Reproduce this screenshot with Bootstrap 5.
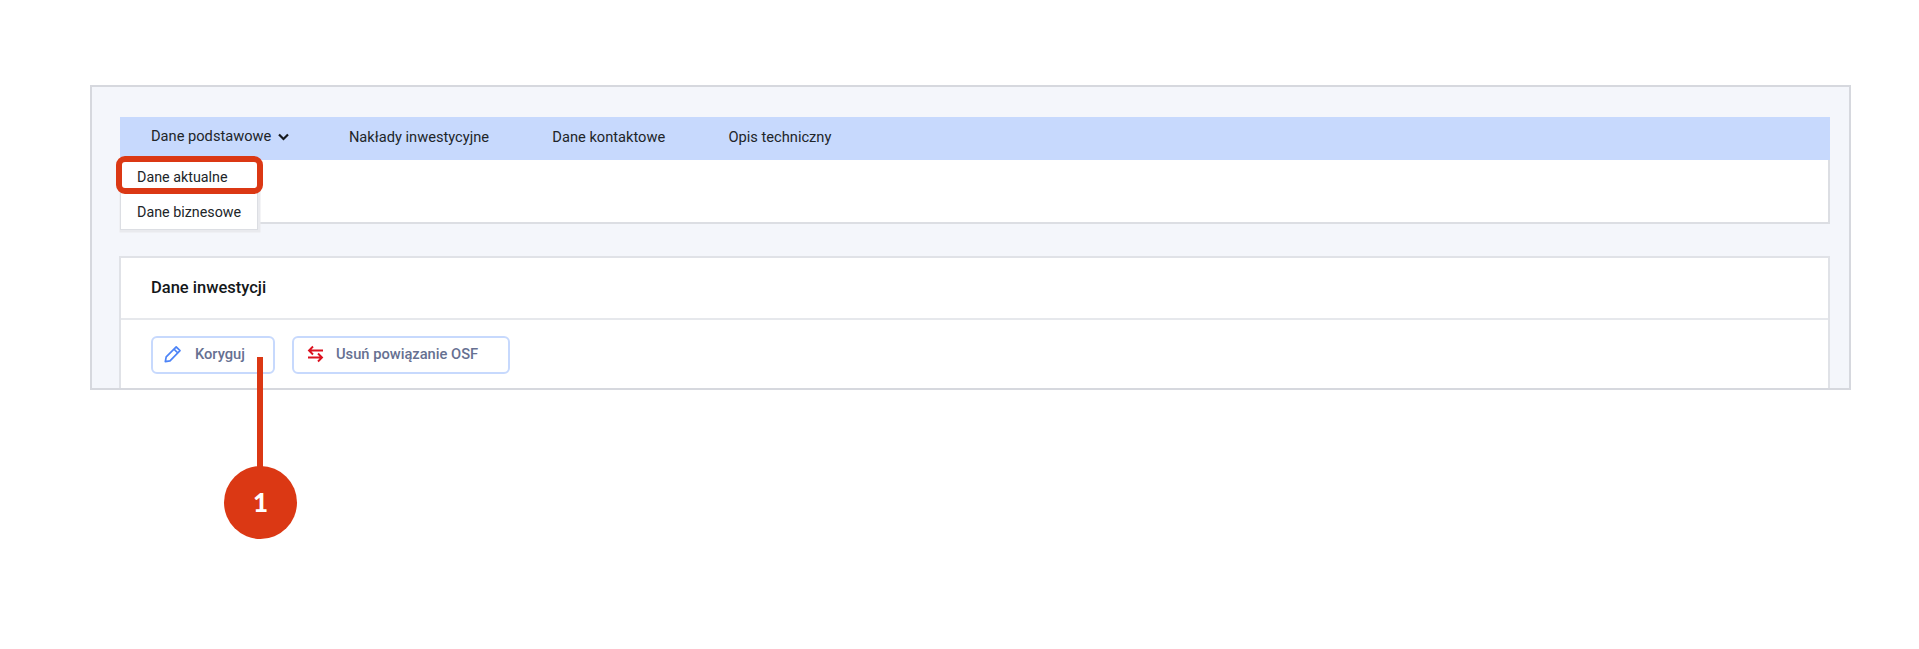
<!DOCTYPE html>
<html lang="pl">
<head>
<meta charset="utf-8">
<title>Dane inwestycji</title>
<link href="https://cdn.jsdelivr.net/npm/bootstrap@5.3.0/dist/css/bootstrap.min.css" rel="stylesheet">
<style>
html,body{height:649px;overflow:hidden;background:#fff}
body{font-family:Roboto,"Liberation Sans",sans-serif;font-size:14px;color:#212529;position:relative}
.shot-frame{margin:85px 0 0 90px;width:1761px;height:305px;background:#f4f6fb;border:2px solid #d6d8de;padding:30px 19px 0 28px;overflow:hidden}
.tab-panel{height:107px;background:#fff;border:solid #dcdee3;border-width:0 2px 2px 1px}
.tab-strip{height:43px;background:#c7d9fd;margin:0 -2px 0 -1px;padding-left:31px;gap:63.3px}
.tab-link{font-size:14.65px;color:#212529;line-height:41px;height:43px}
.tab-chev{margin:0 -4.7px 0 6px}
.data-panel{margin:32px 0 0 -1px;height:200px;background:#fff;border:solid #e0e2e7;border-width:2px 2px 0 2px}
.data-head{height:62px;border-bottom:2px solid #e6e8ec;padding-left:30px;font-size:16.5px;font-weight:500;color:#14171a;line-height:60px}
.data-actions{padding:16px 0 0 30.4px;gap:16.6px}
.act-btn{height:38px;border:2px solid #c7d9fd;border-radius:6px;background:#fff;color:#667091;font-size:14.7px;font-weight:500;padding:0 0 2px;display:flex;align-items:center}
.act-a{width:124px;padding-left:11px;gap:12.5px}
.act-b{width:218px;padding-left:13px;gap:12px}
.drop-menu{position:absolute;left:120px;top:160px;width:138px;height:70px;background:#fff;border:1px solid #dcdee3;box-shadow:1px 1px 0 1.5px #e9eaee;margin:0;padding:0;list-style:none}
.drop-menu li{height:35px;padding-left:16px;line-height:32px;font-size:14.3px;color:#212529}
.note-box{position:absolute;left:116px;top:156px;width:147px;height:38px;border:6px solid #db3814;border-radius:9px}
.note-line{position:absolute;left:257px;top:357px;width:6px;height:112px;background:#db3814}
.note-dot{position:absolute;left:224px;top:466px;width:73px;height:73px;border-radius:50%;background:#db3814;color:#fff;font-size:26px;font-weight:900;font-family:Lato,sans-serif}
</style>
</head>
<body>
<div class="shot-frame">
  <div class="tab-panel">
    <div class="tab-strip d-flex">
      <span class="tab-link d-flex align-items-center pb-1">Dane podstawowe
        <svg class="tab-chev" width="13" height="10" viewBox="0 0 13 10"><path d="M2 2.5 6.5 7 11 2.5" fill="none" stroke="#16191d" stroke-width="2.2"/></svg></span>
      <span class="tab-link">Nakłady inwestycyjne</span>
      <span class="tab-link">Dane kontaktowe</span>
      <span class="tab-link">Opis techniczny</span>
    </div>
  </div>
  <div class="data-panel">
    <div class="data-head">Dane inwestycji</div>
    <div class="data-actions d-flex">
      <button type="button" class="act-btn act-a">
        <svg width="18" height="18" viewBox="0 0 18 18"><path d="M12.2 1.8 16 5.6 6 15.8 1.3 16.7 2.2 11.9ZM10 4.2 13.8 8" fill="none" stroke="#4d84f7" stroke-width="1.7" stroke-linejoin="round"/></svg>
        Koryguj</button>
      <button type="button" class="act-btn act-b">
        <svg width="17" height="18" viewBox="0 0 17 18"><path d="M16 5.5H2M6 1.5 2 5.5 6 9.5M1 12.5H15M11 8.5 15 12.5 11 16.5" fill="none" stroke="#dc1220" stroke-width="1.9"/></svg>
        Usuń powiązanie OSF</button>
    </div>
  </div>
</div>
<ul class="drop-menu">
  <li>Dane aktualne</li>
  <li>Dane biznesowe</li>
</ul>
<div class="note-box"></div>
<div class="note-line"></div>
<div class="note-dot d-flex align-items-center justify-content-center">1</div>
<script src="https://cdn.jsdelivr.net/npm/bootstrap@5.3.0/dist/js/bootstrap.bundle.min.js"></script>
</body>
</html>
